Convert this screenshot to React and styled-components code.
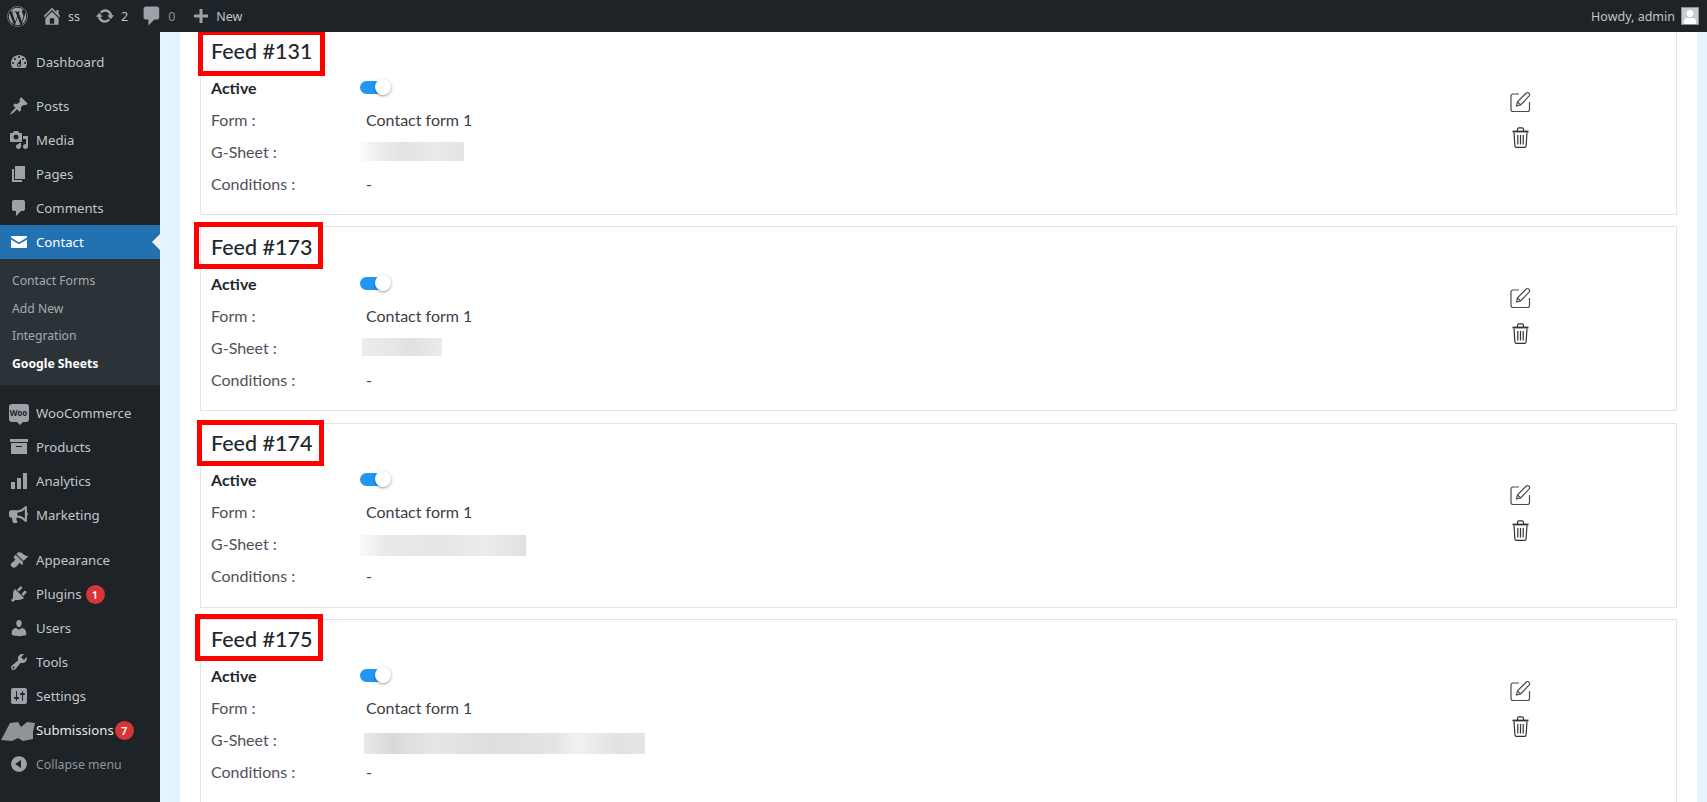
import styled, { createGlobalStyle } from "styled-components"
import { FaWordpress, FaUser, FaBullhorn } from "react-icons/fa"

const GlobalStyle = createGlobalStyle`
  html, body { margin: 0; padding: 0; height: 100%; overflow: hidden; background: #e5f3fe; }
  * { box-sizing: border-box; }
`

const paths = {
  home: "M16 8.5l1.53 1.53-1.06 1.06L10 4.62l-6.47 6.47-1.06-1.06L10 2.5l4 4v-2h2v4zm-6-2.46l6 5.99V18H4v-5.97zM12 17v-5H8v5h4z",
  update: "M10.2 3.28c3.53 0 6.43 2.61 6.92 6h2.08l-3.5 4-3.5-4h2.32c-.45-1.97-2.21-3.45-4.32-3.45-1.45 0-2.73.71-3.54 1.78L4.95 5.66C6.23 4.2 8.11 3.28 10.2 3.28zm-.4 13.44c-3.52 0-6.43-2.61-6.92-6H.8l3.5-4c1.17 1.33 2.33 2.67 3.5 4H5.48c.45 1.97 2.21 3.45 4.32 3.45 1.45 0 2.73-.71 3.54-1.78l1.71 1.95c-1.28 1.46-3.15 2.38-5.25 2.38z",
  comment: "M5 2h9c1.1 0 2 .9 2 2v7c0 1.1-.9 2-2 2h-2l-5 5v-5H5c-1.1 0-2-.9-2-2V4c0-1.1.9-2 2-2z",
  plus: "M17 8.5v3h-5.5V17h-3v-5.5H3v-3h5.5V3h3v5.5z",
  dashboard: "M3.76 16h12.48c1.1-1.37 1.76-3.11 1.76-5 0-4.42-3.58-8-8-8s-8 3.58-8 8c0 1.89.66 3.63 1.76 5zM10 4c.55 0 1 .45 1 1s-.45 1-1 1-1-.45-1-1 .45-1 1-1zM6 6c.55 0 1 .45 1 1s-.45 1-1 1-1-.45-1-1 .45-1 1-1zm8 0c.55 0 1 .45 1 1s-.45 1-1 1-1-.45-1-1 .45-1 1-1zm-5.37 5.55L12 7v6c0 1.1-.9 2-2 2s-2-.9-2-2c0-.57.24-1.08.63-1.45zM4 10c.55 0 1 .45 1 1s-.45 1-1 1-1-.45-1-1 .45-1 1-1zm12 0c.55 0 1 .45 1 1s-.45 1-1 1-1-.45-1-1 .45-1 1-1zm-5 3c0-.55-.45-1-1-1s-1 .45-1 1 .45 1 1 1 1-.45 1-1z",
  post: "M10.44 3.02l1.82-1.82 6.36 6.35-1.83 1.82c-1.05-.68-2.48-.57-3.41.36l-.75.75c-.92.93-1.04 2.35-.35 3.41l-1.83 1.82-2.41-2.41-2.8 2.79c-.42.42-3.38 2.71-3.8 2.29s1.86-3.39 2.28-3.81l2.79-2.79L4.1 9.36l1.83-1.82c1.05.69 2.48.57 3.4-.36l.75-.75c.93-.92 1.05-2.35.36-3.41z",
  media: "M13 11V4c0-.55-.45-1-1-1h-1.67L9 1H5L3.67 3H2c-.55 0-1 .45-1 1v7c0 .55.45 1 1 1h10c.55 0 1-.45 1-1zM7 4.5c1.38 0 2.5 1.12 2.5 2.5S8.38 9.5 7 9.5 4.5 8.38 4.5 7 5.62 4.5 7 4.5zM14 6h5v10.5c0 1.38-1.12 2.5-2.5 2.5S14 17.88 14 16.5s1.12-2.5 2.5-2.5c.17 0 .34.02.5.05V9h-3V6zm-4 8.05V13h2v3.5c0 1.38-1.12 2.5-2.5 2.5S7 17.88 7 16.5 8.12 14 9.5 14c.17 0 .34.02.5.05z",
  page: "M6 15V2h10v13H6zm-1 1h8v2H3V5h2v11z",
  email: "M3 4h14c.55 0 1 .45 1 1v.6L10 10.5 2 5.6V5c0-.55.45-1 1-1zM2 7.4l8 4.9 8-4.9V15c0 .55-.45 1-1 1H3c-.55 0-1-.45-1-1z",
  archive: "M19 5H1V2h18v3zm-1 1v11H2V6h16zm-5 3H7v1h6V9z",
  chart: "M2 11h4v7H2zM8 7h4v11H8zM14 2h4v16h-4z",
  brush: "M14.48 11.06L7.41 3.99l1.5-1.5c.5-.56 2.3-.47 3.51.32 1.21.8 1.43 1.28 2.91 2.1 1.18.64 2.45 1.26 4.45.85zm-.71.71L6.7 4.7 4.93 6.47c-.39.39-.39 1.02 0 1.41l1.06 1.06c.39.39.39 1.03 0 1.42-.6.6-1.43 1.11-2.21 1.69-.35.26-.7.53-1.01.84C1.43 13.23 1.4 15.41 2.7 16.7s3.47 1.26 4.81-.08c.31-.31.58-.66.84-1.01.58-.78 1.09-1.61 1.69-2.21.39-.39 1.02-.39 1.41 0l1.06 1.06c.39.39 1.02.39 1.41 0z",
  plugin: "M13.11 4.36L9.87 7.6 8 5.73l3.24-3.24c.35-.34 1.05-.2 1.56.32.52.51.66 1.21.31 1.55zm-8 1.77l.91-1.12 9.01 9.01-1.19.84c-.71.71-2.63 1.16-3.82 1.16H6.14L4.9 17.26c-.59.59-1.54.59-2.12 0-.59-.58-.59-1.53 0-2.12l1.24-1.24v-3.88c0-1.13.4-3.19 1.09-3.89zm7.26 3.97l3.24-3.24c.34-.35 1.04-.21 1.55.31.52.51.66 1.21.31 1.55l-3.24 3.25z",
  users: "M10 9.25c-2.27 0-2.73-3.44-2.73-3.44C7 4.02 7.82 2 9.97 2c2.16 0 2.98 2.02 2.71 3.81 0 0-.41 3.44-2.68 3.44zm0 2.57L12.72 10c2.39 0 4.52 2.33 4.52 4.53v2.49s-3.65 1.13-7.24 1.13c-3.65 0-7.24-1.13-7.24-1.13v-2.49c0-2.25 1.94-4.53 4.47-4.53z",
  tools: "M16.68 9.77c-1.34 1.34-3.3 1.67-4.95.99l-5.41 6.52c-.99.99-2.59.99-3.58 0s-.99-2.59 0-3.57l6.52-5.42c-.68-1.65-.35-3.61.99-4.95 1.28-1.28 3.12-1.62 4.72-1.06l-2.89 2.89 2.82 2.82 2.86-2.87c.53 1.58.18 3.39-1.08 4.65zM3.81 16.21c.4.39 1.04.39 1.43 0 .4-.4.4-1.04 0-1.43-.39-.4-1.03-.4-1.43 0-.39.39-.39 1.03 0 1.43z",
  settings: "M18 16V4c0-1.1-.9-2-2-2H4c-1.1 0-2 .9-2 2v12c0 1.1.9 2 2 2h12c1.1 0 2-.9 2-2zM8 11h1c.55 0 1 .45 1 1s-.45 1-1 1H8v1.5c0 .28-.22.5-.5.5s-.5-.22-.5-.5V13H6c-.55 0-1-.45-1-1s.45-1 1-1h1V5.5c0-.28.22-.5.5-.5s.5.22.5.5V11zm5-2h-1c-.55 0-1-.45-1-1s.45-1 1-1h1V5.5c0-.28.22-.5.5-.5s.5.22.5.5V7h1c.55 0 1 .45 1 1s-.45 1-1 1h-1v5.5c0 .28-.22.5-.5.5s-.5-.22-.5-.5V9z",
  collapse: "M10 2.16c4.33 0 7.84 3.51 7.84 7.84s-3.51 7.84-7.84 7.84S2.16 14.33 2.16 10 5.71 2.16 10 2.16zm2 11.72V6.12L6.18 9.97z",
}

function Dash({ name, size = 20 }) {
  return (
    <svg width={size} height={size} viewBox="0 0 20 20" fill="currentColor">
      <path d={paths[name]} />
    </svg>
  )
}

function EditIcon() {
  return (
    <svg width="21" height="21" viewBox="0 0 21 21" fill="none" stroke="#4a4a4a" strokeWidth="1.2">
      <path d="M9 3H3a2 2 0 0 0-2 2v13.5a2 2 0 0 0 2 2h14.5a2 2 0 0 0 2-2V11" />
      <path d="M6.5 15l1-4.2L16.3 2a1.6 1.6 0 0 1 2.3 0l.6.6a1.6 1.6 0 0 1 0 2.3L10.6 14z" />
      <path d="M7.5 10.8l3.1 3.2" />
    </svg>
  )
}

function TrashIcon() {
  return (
    <svg width="17" height="21" viewBox="0 0 17 21" fill="none" stroke="#333" strokeWidth="1.2">
      <path d="M0.5 4.5h16" strokeWidth="1.8" />
      <path d="M5.5 4V2.2A1.4 1.4 0 0 1 6.9.9h3.2a1.4 1.4 0 0 1 1.4 1.3V4" />
      <path d="M2 5.5l.9 13.2a1.7 1.7 0 0 0 1.7 1.7h7.8a1.7 1.7 0 0 0 1.7-1.7L15 5.5" />
      <path d="M5.8 8v9.5M8.5 8v9.5M11.2 8v9.5" />
    </svg>
  )
}

const Page = styled.div`
  width: 1707px;
  height: 802px;
  overflow: hidden;
  display: flex;
  flex-direction: column;
  font-family: "Noto Sans", "Open Sans", sans-serif;
`

const TopBar = styled.header`
  height: 32px;
  flex: none;
  background: #1d2327;
  color: #c3c4c7;
  display: flex;
  align-items: center;
  justify-content: space-between;
  font-size: 12.5px;
  position: relative;
  z-index: 3;
`

const TopGroup = styled.div`
  display: flex;
  align-items: center;
  padding-left: 7px;
`

const TopItem = styled.div`
  display: flex;
  align-items: center;
  gap: ${p => p.$inner}px;
  margin-left: ${p => p.$gap}px;
  color: ${p => p.$muted ? "#8c8f94" : "#c3c4c7"};
  svg { color: #9ca2a7; }
`

const Howdy = styled.div`
  display: flex;
  align-items: center;
  gap: 6px;
  padding-right: 8px;
`

const Avatar = styled.div`
  width: 18px;
  height: 18px;
  background: #c9cbcd;
  border: 1px solid #8c8f94;
  display: flex;
  align-items: flex-end;
  justify-content: center;
  color: #fff;
  overflow: hidden;
`

const Body = styled.div`
  flex: 1;
  display: flex;
  min-height: 0;
`

const Sidebar = styled.nav`
  width: 160px;
  flex: none;
  background: #1d2327;
  padding-top: 13px;
`

const MenuGroup = styled.div`
  margin-top: ${p => p.$gap}px;
`

const MenuItem = styled.div`
  height: 34px;
  display: flex;
  align-items: center;
  position: relative;
  font-size: ${p => p.$muted ? 12.3 : 13.2}px;
  color: ${p => p.$active ? "#fff" : p.$muted ? "#8f9499" : p.$bright ? "#e6e8ea" : "#c3c7cb"};
  background: ${p => p.$active ? "#2271b1" : "transparent"};
`

const MenuIcon = styled.span`
  width: 36px;
  flex: none;
  display: flex;
  justify-content: center;
  padding-left: 1px;
  color: ${p => p.$active ? "#fff" : "#9ca2a7"};
`

const ActiveArrow = styled.span`
  position: absolute;
  right: 0;
  top: 9px;
  border: 8px solid transparent;
  border-right-color: #f0f0f1;
  border-left-width: 0;
`

const SubMenu = styled.div`
  background: #2c3338;
  padding: 8px 0 8px 12px;
  display: flex;
  flex-direction: column;
`

const SubItem = styled.div`
  height: 27.5px;
  display: flex;
  align-items: center;
  font-size: 12.2px;
  color: ${p => p.$current ? "#fff" : "#a7aaad"};
  font-weight: ${p => p.$current ? 700 : 400};
`

const Badge = styled.span`
  width: 19px;
  height: 19px;
  border-radius: 50%;
  margin-left: ${p => p.$gap}px;
  background: #d63638;
  color: #fff;
  font-size: 11px;
  font-weight: 600;
  display: flex;
  align-items: center;
  justify-content: center;
`

const WooIcon = styled.span`
  width: 20px;
  height: 18px;
  border-radius: 3px;
  background: #9ca2a7;
  color: #1d2327;
  font-size: 8px;
  font-weight: 700;
  display: flex;
  align-items: center;
  justify-content: center;
  position: relative;
  &::after {
    content: "";
    position: absolute;
    bottom: -3px;
    left: 8px;
    border: 3px solid transparent;
    border-top-color: #9ca2a7;
    border-bottom-width: 0;
  }
`

const SubmissionsLogo = styled.svg`
  position: absolute;
  left: 0;
  top: 8px;
`

const Main = styled.main`
  flex: 1;
  min-width: 0;
  padding: 0 10px 0 20px;
`

const Panel = styled.div`
  background: #fff;
  height: 100%;
  padding: 0 20px;
  display: flex;
  flex-direction: column;
  gap: 11.3px;
  overflow: hidden;
`

const Card = styled.section`
  flex: none;
  height: 185px;
  margin-top: ${p => p.$pull || 0}px;
  border: 1px solid #e2e3e4;
  position: relative;
  padding: 0 10px;
  display: flex;
  justify-content: space-between;
  font-family: Lato, "Open Sans", sans-serif;
`

const Info = styled.div`
  display: flex;
  flex-direction: column;
`

const Title = styled.h3`
  margin: 0;
  height: 40px;
  padding-bottom: 1px;
  display: flex;
  align-items: center;
  font-size: 21.5px;
  font-weight: 500;
  color: #23282d;
`

const Row = styled.div`
  height: 32px;
  display: flex;
  align-items: center;
  font-size: 16px;
  color: ${p => p.$strong ? "#23282d" : "#50505a"};
  font-weight: ${p => p.$strong ? 700 : 400};
`

const Label = styled.span`
  width: 149px;
  flex: none;
`

const Value = styled.span`
  margin-left: 6px;
  color: #3d3d46;
`

const Toggle = styled.span`
  width: 28px;
  height: 13px;
  border-radius: 7px;
  background: #2196f3;
  position: relative;
`

const Knob = styled.span`
  position: absolute;
  right: -3px;
  top: -2px;
  width: 16px;
  height: 16px;
  border-radius: 50%;
  background: #fff;
  box-shadow: 0 1px 3px rgba(0, 0, 0, 0.4);
`

const Blurred = styled.span`
  display: block;
  width: ${p => p.$w}px;
  height: ${p => p.$h}px;
  margin-left: ${p => p.$x}px;
  margin-top: ${p => p.$dy || 0}px;
  background: linear-gradient(90deg, ${p => p.$stops});
`

const Actions = styled.div`
  width: 156px;
  flex: none;
  padding-top: 60px;
  display: flex;
  flex-direction: column;
  align-items: flex-start;
  gap: 15px;
  svg + svg { margin-left: 2px; }
`

const RedBox = styled.div`
  position: absolute;
  left: ${p => p.$x}px;
  top: ${p => p.$y}px;
  width: ${p => p.$w}px;
  height: ${p => p.$h}px;
  border: 5px solid #fe0000;
  pointer-events: none;
`

const feeds = [
  { id: 131, pull: -2, blur: { x: -3, w: 107, h: 19, stops: "#fff 0%, #eee 18%, #e2e2e2 45%, #eaeaea 70%, #e4e4e4 100%" }, box: { x: -3, y: -1, w: 127, h: 46 } },
  { id: 173, blur: { x: 2, w: 80, h: 18, stops: "#ececec 0%, #e6e6e6 40%, #e0e0e0 60%, #ebebeb 100%" }, box: { x: -7, y: -5, w: 129, h: 47 } },
  { id: 174, blur: { x: 0, w: 166, h: 21, dy: 3, stops: "#fafafa 0%, #e9e9e9 15%, #e6e6e6 50%, #ececec 75%, #e0e0e0 100%" }, box: { x: -4, y: -4, w: 127, h: 46 } },
  { id: 175, blur: { x: 4, w: 281, h: 21, dy: 8, stops: "#e8e8e8 0%, #d9d9d9 10%, #e6e6e6 25%, #dedede 45%, #e4e4e4 68%, #f1f1f1 76%, #e2e2e2 90%, #e4e4e4 100%" }, box: { x: -6, y: -6, w: 128, h: 47 } },
]

const menuTop = [
  { icon: <Dash name="post" />, label: "Posts" },
  { icon: <Dash name="media" />, label: "Media" },
  { icon: <Dash name="page" />, label: "Pages" },
  { icon: <Dash name="comment" />, label: "Comments" },
]

const menuShop = [
  { icon: <WooIcon>Woo</WooIcon>, label: "WooCommerce" },
  { icon: <Dash name="archive" />, label: "Products" },
  { icon: <Dash name="chart" />, label: "Analytics" },
  { icon: <FaBullhorn size={19} />, label: "Marketing" },
]

const menuAdmin = [
  { icon: <Dash name="brush" />, label: "Appearance" },
  { icon: <Dash name="plugin" />, label: "Plugins", badge: 1, badgeGap: 4 },
  { icon: <Dash name="users" />, label: "Users" },
  { icon: <Dash name="tools" />, label: "Tools" },
  { icon: <Dash name="settings" />, label: "Settings" },
]

function Item({ item }) {
  return (
    <MenuItem>
      <MenuIcon>{item.icon}</MenuIcon>
      {item.label}
      {item.badge && <Badge $gap={item.badgeGap}>{item.badge}</Badge>}
    </MenuItem>
  )
}

function Feed({ feed }) {
  return (
    <Card $pull={feed.pull}>
      <Info>
        <Title>Feed #{feed.id}</Title>
        <Row $strong>
          <Label>Active</Label>
          <Toggle><Knob /></Toggle>
        </Row>
        <Row>
          <Label>Form :</Label>
          <Value>Contact form 1</Value>
        </Row>
        <Row>
          <Label>G-Sheet :</Label>
          <Blurred $x={feed.blur.x} $w={feed.blur.w} $h={feed.blur.h} $dy={feed.blur.dy} $stops={feed.blur.stops} />
        </Row>
        <Row>
          <Label>Conditions :</Label>
          <Value>-</Value>
        </Row>
      </Info>
      <Actions>
        <EditIcon />
        <TrashIcon />
      </Actions>
      <RedBox $x={feed.box.x} $y={feed.box.y} $w={feed.box.w} $h={feed.box.h} />
    </Card>
  )
}

export default function App() {
  return (
    <Page>
      <GlobalStyle />
      <TopBar>
        <TopGroup>
          <FaWordpress size={21} color="#9ca2a7" />
          <TopItem $gap={13} $inner={5}><Dash name="home" size={22} />ss</TopItem>
          <TopItem $gap={15} $inner={6}><Dash name="update" />2</TopItem>
          <TopItem $gap={12} $inner={4} $muted><Dash name="comment" size={24} />0</TopItem>
          <TopItem $gap={16} $inner={5}><Dash name="plus" size={20} />New</TopItem>
        </TopGroup>
        <Howdy>
          Howdy, admin
          <Avatar><FaUser size={14} /></Avatar>
        </Howdy>
      </TopBar>
      <Body>
        <Sidebar>
          <MenuItem>
            <MenuIcon><Dash name="dashboard" /></MenuIcon>
            Dashboard
          </MenuItem>
          <MenuGroup $gap={10}>
            {menuTop.map(item => <Item key={item.label} item={item} />)}
            <MenuItem $active>
              <MenuIcon $active><Dash name="email" /></MenuIcon>
              Contact
              <ActiveArrow />
            </MenuItem>
            <SubMenu>
              <SubItem>Contact Forms</SubItem>
              <SubItem>Add New</SubItem>
              <SubItem>Integration</SubItem>
              <SubItem $current>Google Sheets</SubItem>
            </SubMenu>
          </MenuGroup>
          <MenuGroup $gap={10.5}>
            {menuShop.map(item => <Item key={item.label} item={item} />)}
          </MenuGroup>
          <MenuGroup $gap={11.5}>
            {menuAdmin.map(item => <Item key={item.label} item={item} />)}
            <MenuItem $bright>
              <SubmissionsLogo width="36" height="21" viewBox="0 0 36 21">
                <path d="M1 19 L10 2 L18 1 L21 6 L27 1 L35 2 L33 11 L33 18 L23 20 L18 17 L12 20 Z" fill="#8f9499" />
              </SubmissionsLogo>
              <MenuIcon />
              Submissions
              <Badge $gap={1}>7</Badge>
            </MenuItem>
            <MenuItem $muted>
              <MenuIcon><Dash name="collapse" /></MenuIcon>
              Collapse menu
            </MenuItem>
          </MenuGroup>
        </Sidebar>
        <Main>
          <Panel>
            {feeds.map(feed => <Feed key={feed.id} feed={feed} />)}
          </Panel>
        </Main>
      </Body>
    </Page>
  )
}
